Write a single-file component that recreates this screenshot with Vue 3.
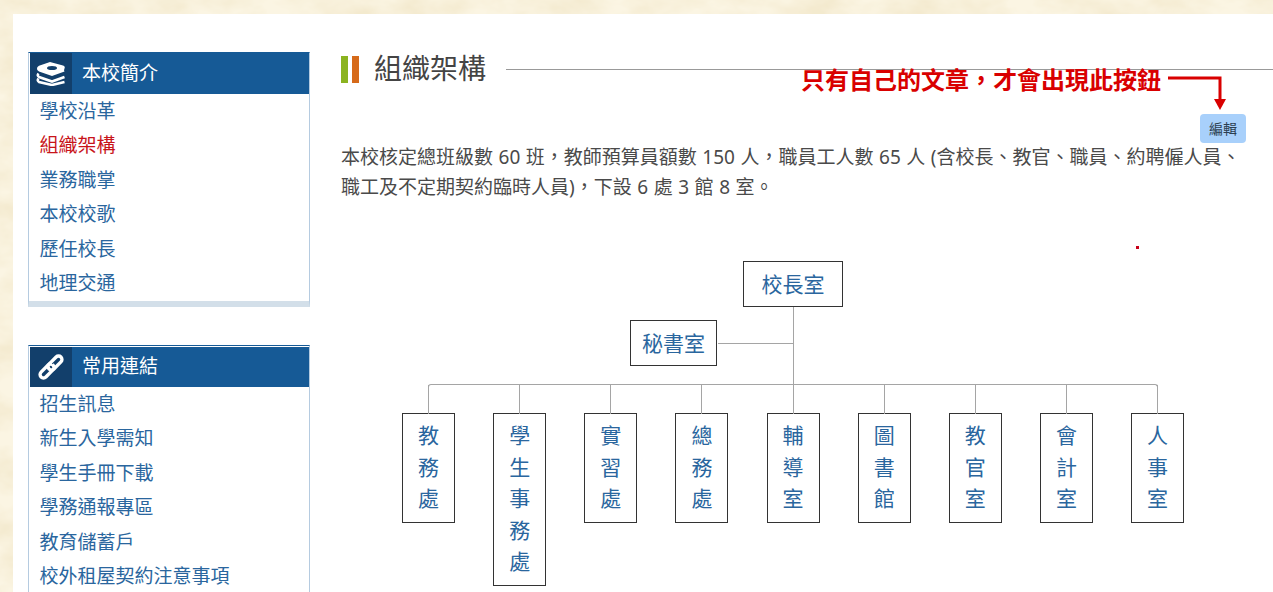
<script setup>
const introLinks = [
  { label: '學校沿革' },
  { label: '組織架構', active: true },
  { label: '業務職掌' },
  { label: '本校校歌' },
  { label: '歷任校長' },
  { label: '地理交通' },
]
const commonLinks = ['招生訊息', '新生入學需知', '學生手冊下載', '學務通報專區', '教育儲蓄戶', '校外租屋契約注意事項']
const offices = ['教務處', '學生事務處', '實習處', '總務處', '輔導室', '圖書館', '教官室', '會計室', '人事室']
</script>

<template>
  <div class="page">
    <svg class="texture" width="1273" height="592" aria-hidden="true">
      <filter id="parchment" x="0" y="0" width="100%" height="100%">
        <feTurbulence type="fractalNoise" baseFrequency="0.02 0.035" numOctaves="4" seed="7" />
        <feColorMatrix type="matrix" values="0 0 0 0 0.90  0 0 0 0 0.82  0 0 0 0 0.62  2 0 0 0 -0.65" />
      </filter>
      <rect width="1273" height="592" filter="url(#parchment)" />
    </svg>
    <div class="sheet">
      <aside class="sidebar">
        <section class="menu">
          <h3 class="menu-head">
            <span class="menu-icon">
              <svg width="30" height="24" viewBox="0 0 30 24">
                <path fill="#fff" d="M14 0 27 3.500Q29.500 4.500 28.500 6.500 27.500 8.500 28.500 9.500L16 14 3 9.500Q.5 8 1 6 1.500 4.500 3 3.800Z" />
                <ellipse cx="16" cy="6" rx="5" ry="2" fill="#123f6b" />
                <path fill="none" stroke="#fff" stroke-width="2.600" d="M2.500 11.500Q.8 13.500 3 15L16 19.500 28.500 15" />
                <path fill="none" stroke="#fff" stroke-width="2.600" d="M2.500 16.500Q.8 18.500 3 20L16 23 28.500 20" />
              </svg>
            </span>
            <span>本校簡介</span>
          </h3>
          <ul class="menu-list">
            <li v-for="item in introLinks" :key="item.label" :class="{ active: item.active }">{{ item.label }}</li>
          </ul>
        </section>
        <section class="menu">
          <h3 class="menu-head">
            <span class="menu-icon">
              <svg width="26" height="26" viewBox="0 0 26 26" fill="none" stroke-width="3.400">
                <rect x="5.600" y="8.600" width="6.800" height="16.800" rx="3.400" stroke="#fff" transform="rotate(45 9 17)" />
                <rect x="13.600" y="0.600" width="6.800" height="16.800" rx="3.400" stroke="#123f6b" stroke-width="5.400" stroke-dasharray="14 60" stroke-dashoffset="-28" transform="rotate(45 17 9)" />
                <rect x="13.600" y="0.600" width="6.800" height="16.800" rx="3.400" stroke="#fff" transform="rotate(45 17 9)" />
              </svg>
            </span>
            <span>常用連結</span>
          </h3>
          <ul class="menu-list">
            <li v-for="item in commonLinks" :key="item">{{ item }}</li>
          </ul>
        </section>
      </aside>

      <main class="content">
        <div class="title-row">
          <span class="title-mark"></span>
          <h1>組織架構</h1>
          <span class="title-line"></span>
        </div>
        <div class="notice">
          <span class="notice-text">只有自己的文章&#xFF0C;才會出現此按鈕</span>
          <svg class="notice-arrow" width="60" height="36" viewBox="0 0 60 36">
            <path d="M0 3H52V26" fill="none" stroke="#d90000" stroke-width="3" />
            <path d="M46 24H58L52 35Z" fill="#d90000" />
          </svg>
        </div>
        <div class="edit-row"><button class="edit-btn">編輯</button></div>
        <p class="intro">本校核定總班級數 60 班&#xFF0C;教師預算員額數 150 人&#xFF0C;職員工人數 65 人 (含校長、教官、職員、約聘僱人員、職工及不定期契約臨時人員)&#xFF0C;下設 6 處 3 館 8 室。</p>

        <span class="dot"></span>

        <div class="org">
          <span class="trunk"></span>
          <div class="node head">校長室</div>
          <div class="secretary">
            <div class="node">秘書室</div>
          </div>
          <div class="rail"></div>
          <div class="offices">
            <div v-for="name in offices" :key="name" class="node office">
              <span v-for="ch in name" :key="ch">{{ ch }}</span>
            </div>
          </div>
        </div>
      </main>
    </div>
  </div>
</template>

<style scoped>
.page {
  position: relative;
  height: 592px;
  overflow: hidden;
  padding: 14px 0 0 13px;
  box-sizing: border-box;
  background-color: #fbf5e3;
  font-family: "Noto Sans", "Noto Sans CJK TC", sans-serif;
}

.texture {
  position: absolute;
  left: 0;
  top: 0;
}

.sheet {
  position: relative;
  display: flex;
  align-items: flex-start;
  background: #fff;
  height: 578px;
  padding: 38px 27px 0 15px;
  box-sizing: border-box;
}

.sidebar {
  width: 282px;
  flex: none;
  display: flex;
  flex-direction: column;
  gap: 38px;
}

.menu {
  border: 1px solid #b5cbe0;
  border-top: 1px solid #165a96;
  border-bottom: 6px solid #d3dfe9;
  box-sizing: border-box;
}

.menu-head {
  display: flex;
  align-items: center;
  height: 41px;
  margin: 0 0 0 1px;
  background: #165a96;
  color: #fff;
  font-size: 19px;
  line-height: 36px;
  font-weight: 400;
}

.menu + .menu .menu-head {
  height: 40px;
  margin-top: 1px;
}

.menu-head > span:last-child {
  margin-bottom: 2px;
}

.menu-icon {
  display: flex;
  align-items: center;
  justify-content: center;
  width: 42px;
  height: 100%;
  margin-right: 10px;
  background: #123f6b;
}

.menu-list {
  list-style: none;
  margin: 0;
  padding: 0 0 .6px 10.500px;
}

.menu-list li {
  height: 34.400px;
  line-height: 34.400px;
  font-size: 19px;
  color: #2a669e;
}

.menu-list li.active {
  color: #c8141a;
}

.content {
  flex: 1;
  position: relative;
  margin-left: 31px;
  min-width: 0;
}

.title-row {
  display: flex;
  align-items: center;
  height: 34px;
}

.title-mark {
  width: 18px;
  height: 27px;
  background: linear-gradient(90deg, #8bb320 0 7px, #fff 7px 11px, #d66a1a 11px);
}

.title-row h1 {
  margin: 0 20px 4px 15px;
  font-size: 28px;
  font-weight: 400;
  color: #444;
}

.title-line {
  flex: 1;
  height: 1px;
  margin-right: -27px;
  background: #999;
}

.notice {
  position: absolute;
  top: 13px;
  left: 460px;
  display: flex;
  align-items: flex-start;
  gap: 7px;
}

.notice-text {
  font-size: 24px;
  line-height: 30px;
  font-weight: 700;
  color: #d90000;
  white-space: nowrap;
}

.notice-arrow {
  margin-top: 10px;
}

.edit-row {
  display: flex;
  justify-content: flex-end;
  margin-top: 28px;
}

.edit-btn {
  width: 46px;
  height: 29px;
  padding: 0 0 2px;
  border: 0;
  border-radius: 4px;
  background: #a8d0fb;
  color: #2c3e50;
  font-family: inherit;
  font-size: 14px;
}

.intro {
  margin: -1px 0 0;
  font-size: 19px;
  line-height: 30px;
  word-spacing: .6px;
  color: #4a4a4a;
}

.dot {
  position: absolute;
  left: 795px;
  top: 194px;
  width: 3px;
  height: 3px;
  background: #c8001a;
}

.org {
  position: relative;
  width: 782px;
  margin: 59px 0 0 61px;
  display: flex;
  flex-direction: column;
  align-items: center;
  font-size: 21px;
  color: #2a669e;
}

.trunk {
  position: absolute;
  top: 46px;
  left: 390.500px;
  width: 1px;
  height: 106px;
  background: #a5a5a5;
}

.node {
  background: #fff;
  border: 1px solid #333;
  box-sizing: border-box;
  text-align: center;
}

.head {
  width: 100px;
  height: 46px;
  line-height: 44px;
}

.secretary {
  position: relative;
  width: 100%;
  height: 46px;
  margin-top: 13px;
}

.secretary .node {
  position: absolute;
  left: 228px;
  width: 87px;
  height: 46px;
  line-height: 44px;
}

.secretary::after {
  content: "";
  position: absolute;
  left: 316px;
  top: 23px;
  width: 75px;
  height: 1px;
  background: #a5a5a5;
}

.rail {
  width: 730px;
  height: 29px;
  margin-top: 18px;
  border: 1px solid #a5a5a5;
  border-bottom: 0;
  border-radius: 3px 3px 0 0;
  box-sizing: border-box;
}

.offices {
  display: flex;
  justify-content: space-between;
  align-items: flex-start;
  width: 100%;
}

.office {
  position: relative;
  width: 53px;
  display: flex;
  flex-direction: column;
  align-items: center;
  padding: 6px 0 7px;
  line-height: 31.500px;
}

.office::before {
  content: "";
  position: absolute;
  left: 25px;
  top: -29px;
  width: 1px;
  height: 29px;
  background: #a5a5a5;
}
</style>

<style>
body {
  margin: 0;
}
</style>
